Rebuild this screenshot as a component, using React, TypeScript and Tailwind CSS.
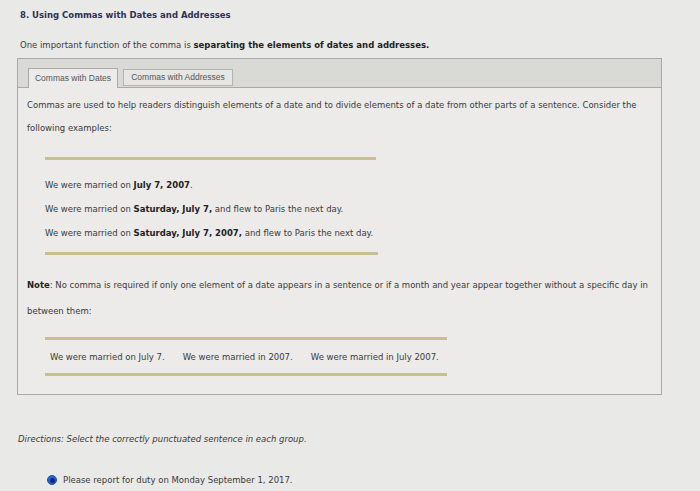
import React from 'react';

const verdana = { fontFamily: '"DejaVu Sans", Verdana, sans-serif' };
const arial = { fontFamily: '"Liberation Sans", Arial, sans-serif' };

function GoldRule({ width }: { width: number }) {
  return <div className="h-[3px] ml-[18px] bg-[#c9bd92]" style={{ width }} />;
}

export default function App() {
  return (
    <div
      className="w-[700px] h-[491px] overflow-hidden bg-[#e9e9e7] text-[#3a3a3a] text-[8.5px]"
      style={verdana}
    >
      <div className="pt-[9px] pl-[20px] text-[8.5px] font-bold text-[#2d3152] leading-[12px]">
        8. Using Commas with Dates and Addresses
      </div>

      <p className="mt-[17px] pl-[20px] leading-[14px]">
        One important function of the comma is <b className="text-[#222]">separating the elements of dates and addresses.</b>
      </p>

      {/* tab panel */}
      <div className="mt-[6px] ml-[17px] w-[645px] border border-[#a9a9a7] bg-[#ecebe9]">
        <div className="h-[29px] flex items-end pl-[10px] gap-[5px] bg-[#d9d9d6] border-b border-[#a9a9a7]">
          <div
            className="h-[20px] w-[90px] -mb-px flex items-center justify-center bg-[#ecebe9] border border-b-0 border-[#a9a9a7] text-[8.5px] text-[#555]"
            style={arial}
          >
            Commas with Dates
          </div>
          <div
            className="h-[17px] w-[110px] mb-px flex items-center justify-center bg-[#e6e6e3] border border-[#b3b3b0] text-[8.5px] text-[#555]"
            style={arial}
          >
            Commas with Addresses
          </div>
        </div>

        <div className="pt-[6px] pb-[18px] pl-[9px] pr-[10px]">
          <p className="leading-[23px]">
            Commas are used to help readers distinguish elements of a date and to divide elements of a date from other parts of a sentence. Consider the following examples:
          </p>

          <div className="mt-[17px]">
            <GoldRule width={331} />
          </div>

          <div className="mt-[13px] pl-[18px] leading-[24px]">
            <p>We were married on <b className="text-[#222]">July 7, 2007</b>.</p>
            <p>We were married on <b className="text-[#222]">Saturday, July 7,</b> and flew to Paris the next day.</p>
            <p>We were married on <b className="text-[#222]">Saturday, July 7, 2007,</b> and flew to Paris the next day.</p>
          </div>

          <div className="mt-[7px]">
            <GoldRule width={333} />
          </div>

          <p className="mt-[17px] leading-[26px]">
            <b className="text-[#222]">Note</b>: No comma is required if only one element of a date appears in a sentence or if a month and year appear together without a specific day in between them:
          </p>

          <div className="mt-[13px]">
            <GoldRule width={402} />
          </div>

          <div className="mt-[7px] ml-[23px] flex gap-[18px] leading-[20px]">
            <span>We were married on July 7.</span>
            <span>We were married in 2007.</span>
            <span>We were married in July 2007.</span>
          </div>

          <div className="mt-[6px]">
            <GoldRule width={402} />
          </div>
        </div>
      </div>

      <p className="mt-[37px] pl-[18px] italic leading-[14px]">
        Directions: Select the correctly punctuated sentence in each group.
      </p>

      <div className="mt-[27px] pl-[47px] flex items-center gap-[6px] leading-[14px]">
        <span className="w-[10px] h-[10px] rounded-full bg-[#2563d9] border border-[#1a4fb0] flex items-center justify-center">
          <span className="w-[5px] h-[5px] rounded-full bg-[#0b2a7a]" />
        </span>
        <span>Please report for duty on Monday September 1, 2017.</span>
      </div>
    </div>
  );
}
